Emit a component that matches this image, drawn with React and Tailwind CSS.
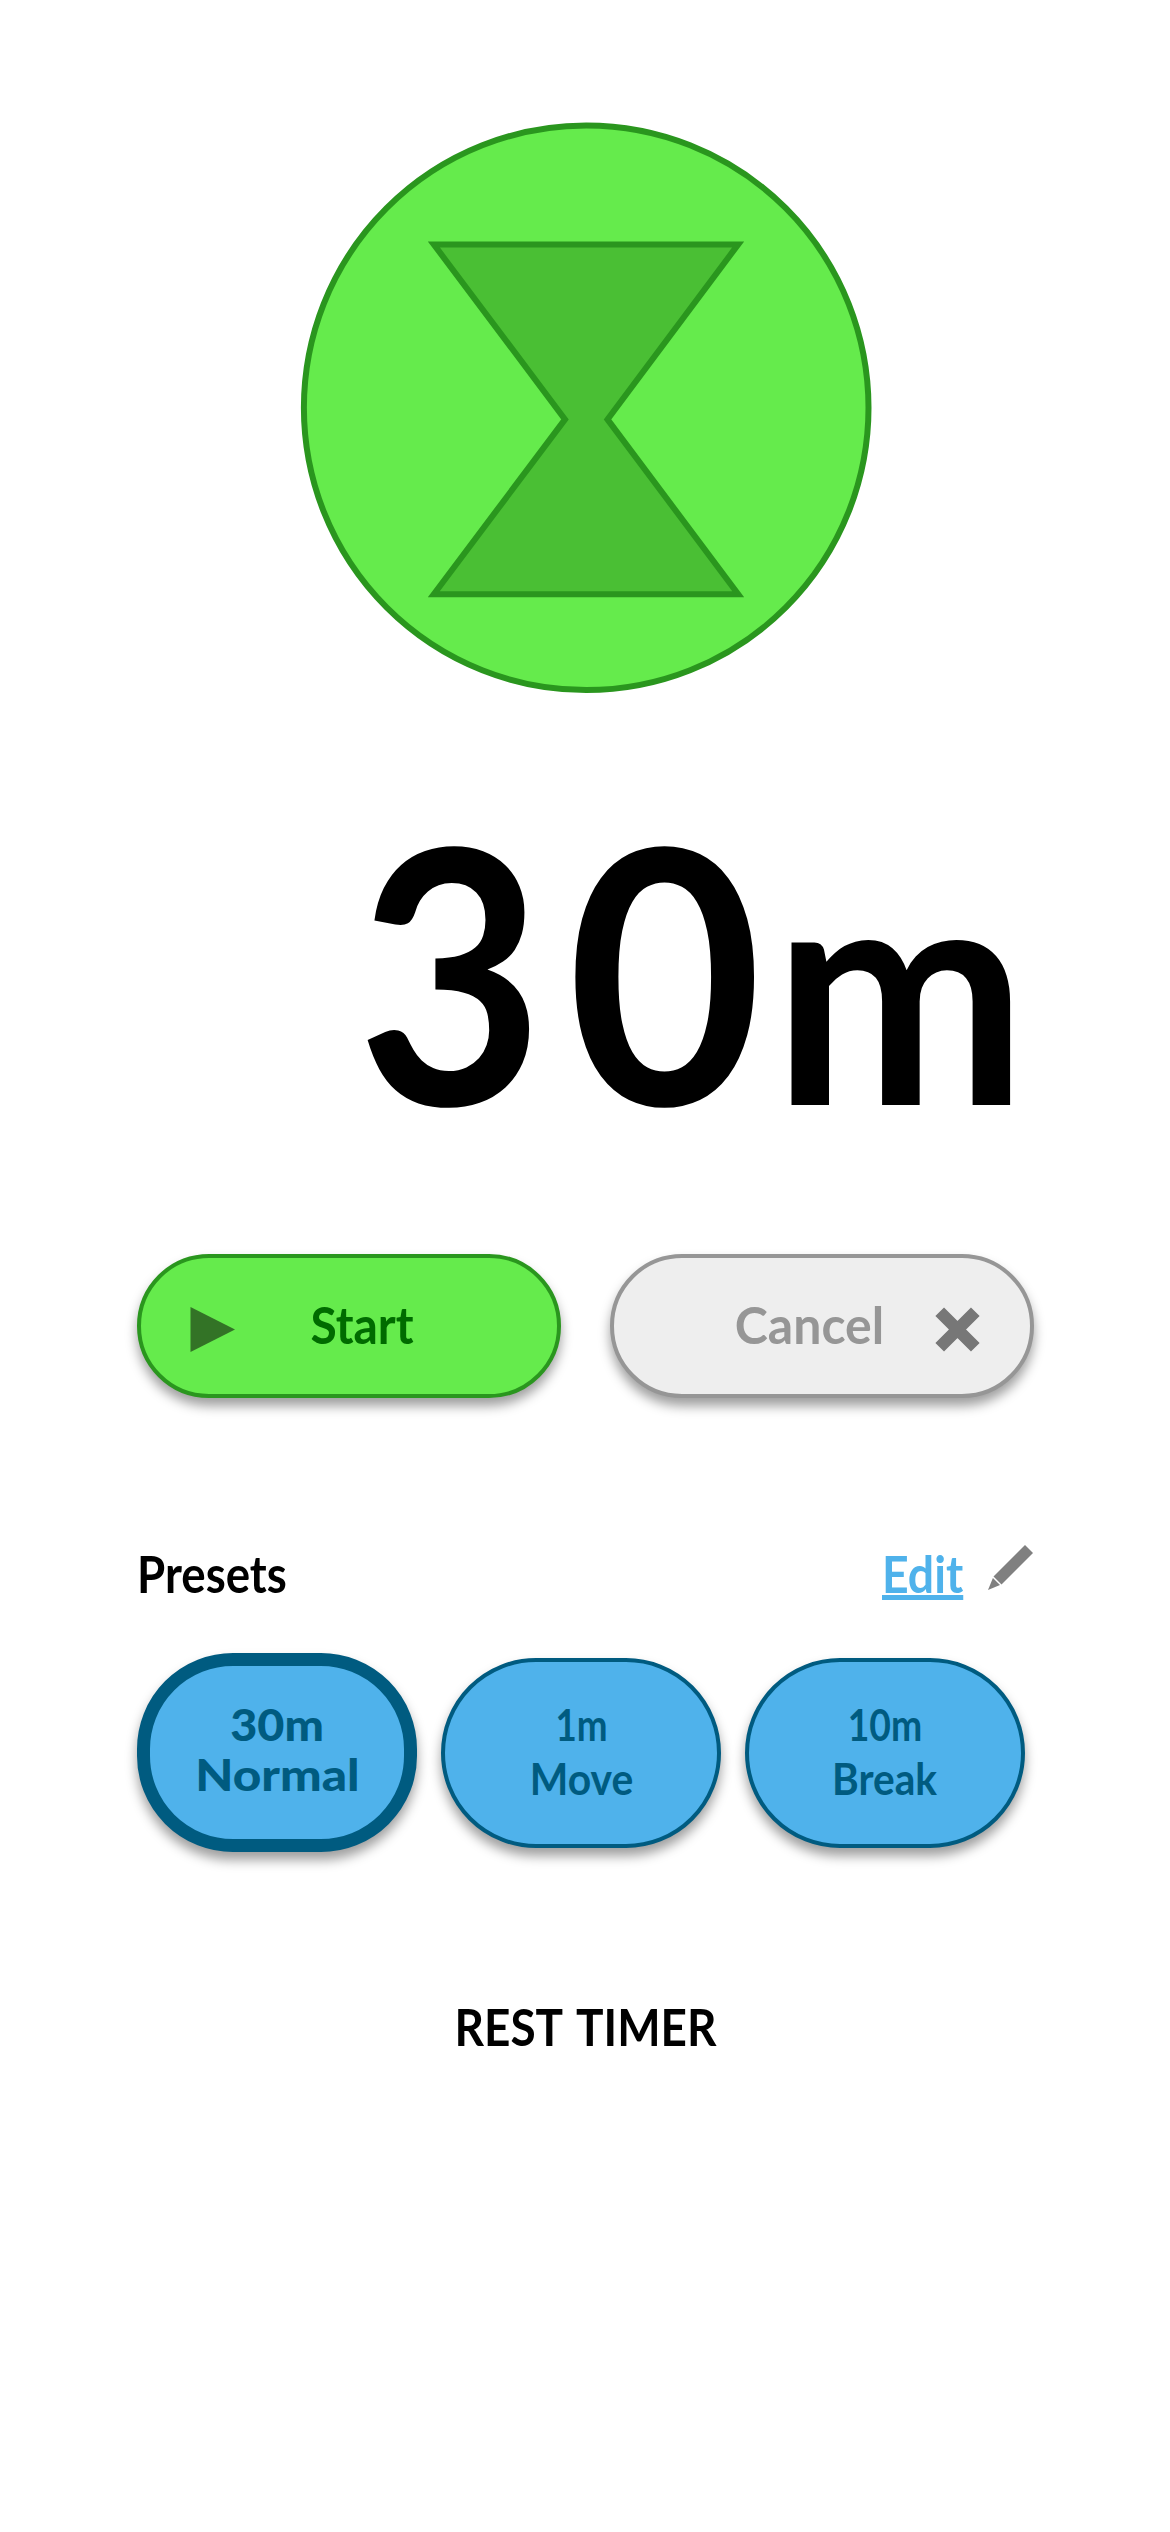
import React from "react";

function Omnitrix() {
  return (
    <svg className="mx-auto h-[576px] w-[576px]" viewBox="297 120 576 576" fill="none" stroke="#2a961e" strokeWidth="6">
      <circle cx="585.2" cy="407.8" r="282.3" fill="#65eb4c" />
      <path d="M432.8 244.4H737.2L606.5 419.4L737.2 594.2H432.8L564 419.4Z" fill="#4abf34" />
    </svg>
  );
}

function Time() {
  return (
    <div className="mt-[92px] flex h-[360px] justify-end text-[354px] leading-[360px] font-bold">
      <span className="w-[210px] origin-[0_317px] scale-x-[0.912]">3</span>
      <span className="w-[206px] origin-[0_317px] scale-x-[0.952]">0</span>
      <span className="w-[261px] origin-[0_317px] scale-x-[0.857] scale-y-[0.895]">m</span>
    </div>
  );
}

function Preset({ time, name, timeClass, nameClass, className }) {
  return (
    <button
      className={`flex w-[280px] shrink-0 flex-col items-center justify-center rounded-[96px] border-[#005b80] bg-[#4fb2eb] text-[43px] text-[#005b80] shadow-[0_8px_12px_rgba(0,0,0,0.38)] ${className}`}
    >
      <span className={timeClass}>{time}</span>
      <span className={nameClass}>{name}</span>
    </button>
  );
}

export default function App() {
  return (
    <main className="flex h-[2532px] w-[1170px] flex-col overflow-hidden bg-white pt-[120px] pr-[136px] pl-[137px] font-['Lato',sans-serif] font-bold whitespace-nowrap text-black">
      <Omnitrix />
      <Time />

      <div className="mt-[106px] flex h-36 justify-between text-[51px]">
        <button className="flex w-[424px] items-center rounded-full border-4 border-[#2a961e] bg-[#65eb4c] pr-[68px] pl-[49px] text-[#006b00] shadow-[0_8px_12px_rgba(0,0,0,0.38)]">
          <svg className="mt-1.5 h-[45px] w-[45px]" viewBox="0 0 45 45" fill="#337326">
            <path d="M0.5 0L45 22.5L0.5 45Z" />
          </svg>
          <span className="flex-1 scale-x-[0.94] pb-0.5">Start</span>
        </button>
        <button className="flex w-[424px] items-center rounded-full border-4 border-[#969696] bg-[#eee] pr-[50px] pl-[70px] text-[#969696] shadow-[0_8px_12px_rgba(0,0,0,0.38)]">
          <span className="flex-1 scale-x-[0.98] pb-0.5">Cancel</span>
          <svg className="mt-1.5 h-[45px] w-[45px]" viewBox="0 0 45 45" stroke="#777" strokeWidth="12.2">
            <path d="M4.7 4.7L40.3 40.3M40.3 4.7L4.7 40.3" />
          </svg>
        </button>
      </div>

      <div className="mt-[145px] flex h-[61px] text-[51px] leading-[61px]">
        <h2 className="flex-1 origin-left scale-x-[0.895]">Presets</h2>
        <a className="w-[81px] text-[#4fb2eb]">
          <span className="inline-block origin-left scale-x-[0.91] underline decoration-[5px] underline-offset-[2px] [text-decoration-skip-ink:none]">
            Edit
          </span>
        </a>
        <svg className="mt-0.5 mr-px ml-[25px] h-[45px] w-[45px]" viewBox="0 0 45 45" fill="#808080">
          <path d="M37 0L45 8L13.5 39.5L5.5 31.5Z" />
          <path d="M4.9 33L12 40L0 45Z" />
        </svg>
      </div>

      <div className="mt-[49px] flex h-[199px] items-center gap-6">
        <Preset
          time="30m"
          name="Normal"
          className="h-[199px] border-[13px] pb-1.5 leading-[50px] font-black"
          timeClass="scale-x-[1.088]"
          nameClass="scale-x-[1.15]"
        />
        <Preset
          time="1m"
          name="Move"
          className="h-[190px] border-4 pb-0.5 leading-[54px]"
          timeClass="scale-x-[0.855]"
          nameClass="scale-x-[0.95]"
        />
        <Preset
          time="10m"
          name="Break"
          className="h-[190px] border-4 pb-0.5 leading-[54px]"
          timeClass="scale-x-[0.867]"
          nameClass="scale-x-[0.945]"
        />
      </div>

      <h1 className="mt-[144px] scale-x-[0.9] text-center text-[51px] leading-[61px] [word-spacing:5px]">REST TIMER</h1>
    </main>
  );
}
